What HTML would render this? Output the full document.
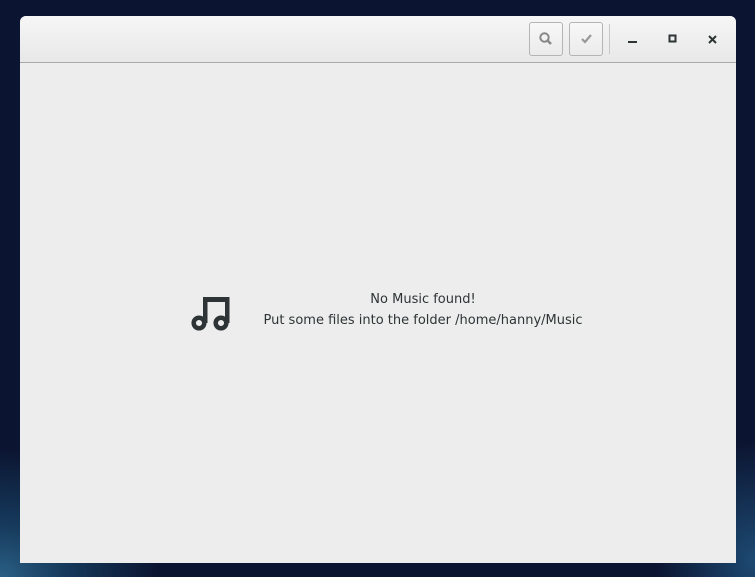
<!DOCTYPE html><html><head><style>
body{margin:0;width:755px;height:577px;overflow:hidden;background:radial-gradient(ellipse 160px 130px at 0px 577px,#2a5f85 0%,#163a5c 40%,transparent 100%),radial-gradient(ellipse 100px 120px at 755px 560px,#1d4a72 0%,transparent 100%),#0b1430;font-family:"Liberation Sans","DejaVu Sans",sans-serif;position:relative}
.win{position:absolute;left:20px;top:16px;width:716px;height:547px;background:#ededed;border-radius:6px 6px 0 0;overflow:hidden}
.hb{height:46px;background:linear-gradient(#f6f6f6,#e8e8e8);border-bottom:1px solid #a8a8a8}
.btn{position:absolute;top:6px;width:34px;height:34px;border:1px solid #b4b4b4;border-radius:3px;background:linear-gradient(#f8f8f8,#ebebeb);box-sizing:border-box}
.sep{position:absolute;left:589px;top:8px;width:1px;height:30px;background:#c8c8c8}
.t{position:absolute;left:0;width:806px;text-align:center;font-size:13px;color:#2e3436;font-family:"DejaVu Sans",sans-serif}
</style></head><body>
<div class="win"><div class="hb"></div>
<div class="btn" style="left:509px"><svg width="32" height="32"><circle cx="14.5" cy="14.5" r="4.2" fill="none" stroke="#888" stroke-width="2"/><line x1="17.5" y1="17.5" x2="21" y2="21" stroke="#888" stroke-width="2.5"/></svg></div>
<div class="btn" style="left:549px"><svg width="32" height="32"><path d="M12 16l3 3 6-7" fill="none" stroke="#999" stroke-width="2.2"/></svg></div>
<div class="sep"></div>
<svg style="position:absolute;left:600px;top:13px" width="110" height="24"><rect x="8" y="12" width="9" height="2" fill="#2e3436"/><rect x="49.5" y="6.5" width="6" height="6" fill="none" stroke="#2e3436" stroke-width="2"/><path d="M89 7l7 7M96 7l-7 7" stroke="#2e3436" stroke-width="2"/></svg>
<svg style="position:absolute;left:170px;top:281px" width="44" height="38"><rect x="13" y="0" width="26" height="5" fill="#2e3436"/><rect x="13" y="0" width="4.5" height="26" fill="#2e3436"/><rect x="35" y="0" width="4.5" height="26" fill="#2e3436"/><circle cx="9" cy="26" r="5.3" fill="none" stroke="#2e3436" stroke-width="4.5"/><circle cx="31" cy="26" r="5.3" fill="none" stroke="#2e3436" stroke-width="4.5"/></svg>
<div class="t" style="top:276px">No Music found!</div>
<div class="t" style="top:297px">Put some files into the folder /home/hanny/Music</div>
</div>
</body></html>
